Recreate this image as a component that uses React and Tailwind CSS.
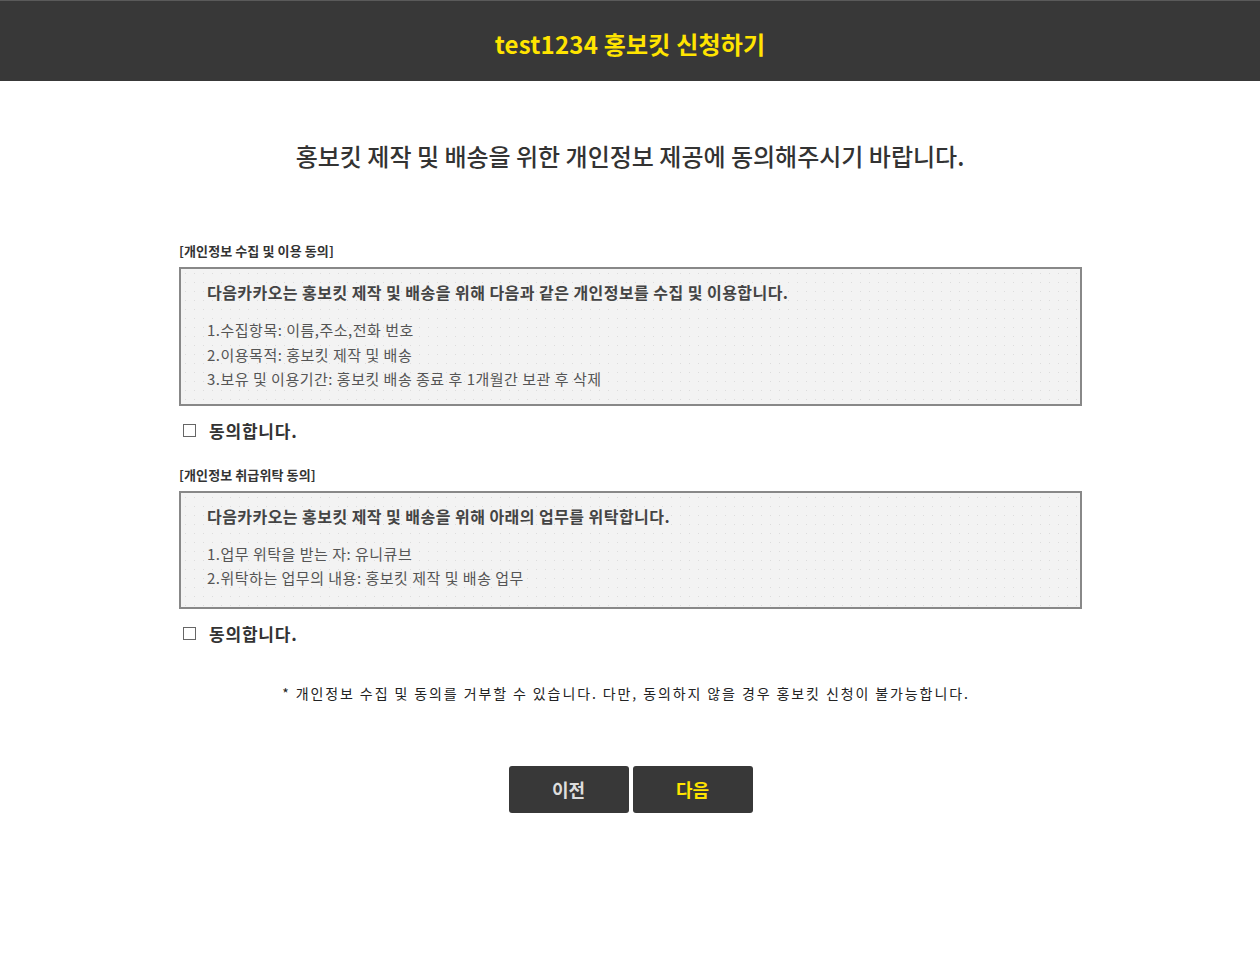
import React from 'react'

const FONT = "font-['Noto_Sans_CJK_KR','Noto_Sans',sans-serif]"

const SECTIONS = [
  {
    label: '[개인정보 수집 및 이용 동의]',
    title: '다음카카오는 홍보킷 제작 및 배송을 위해 다음과 같은 개인정보를 수집 및 이용합니다.',
    lines: ['1.수집항목: 이름,주소,전화 번호', '2.이용목적: 홍보킷 제작 및 배송', '3.보유 및 이용기간: 홍보킷 배송 종료 후 1개월간 보관 후 삭제'],
    pb: 'pb-[12px]',
  },
  {
    label: '[개인정보 취급위탁 동의]',
    title: '다음카카오는 홍보킷 제작 및 배송을 위해 아래의 업무를 위탁합니다.',
    lines: ['1.업무 위탁을 받는 자: 유니큐브', '2.위탁하는 업무의 내용: 홍보킷 제작 및 배송 업무'],
    pb: 'pb-[16px]',
  },
]

function Section({ label, title, lines, pb }) {
  return (
    <div>
      <div className="text-[13px] font-bold text-[#333] tracking-[0.1px] leading-[17px]">{label}</div>
      <div className={`mt-[8px] border-2 border-[#888] bg-[#f3f3f3] bg-[radial-gradient(circle,#dcdcdc_0.8px,transparent_1px)] bg-[length:9px_9px] pl-[26px] pt-[12px] ${pb}`}>
        <div className="text-[16px] font-bold text-[#444] leading-[22px] tracking-[0.45px]">{title}</div>
        <div className="mt-[15px] text-[15px] text-[#555] leading-[24.5px] tracking-[0.5px]">
          {lines.map((l) => (
            <div key={l}>{l}</div>
          ))}
        </div>
      </div>
      <label className="flex items-center mt-[12px] h-[26px] pl-[4px]">
        <span className="w-[13px] h-[13px] border border-[#666] bg-white" />
        <span className="ml-[13px] text-[17px] font-bold text-[#333] tracking-[0.8px]">동의합니다.</span>
      </label>
    </div>
  )
}

export default function App() {
  return (
    <div className={`${FONT} min-h-[954px] bg-white`}>
      <header className="h-[81px] bg-[#383838] border-t border-[#5a5a5a] flex items-center justify-center">
        <h1 className="text-[24px] font-bold text-[#ffe400] tracking-[0.2px] pt-[6px]">test1234 홍보킷 신청하기</h1>
      </header>
      <h2 className="mt-[58px] text-center text-[24px] text-[#333] font-medium leading-[34px]">
        홍보킷 제작 및 배송을 위한 개인정보 제공에 동의해주시기 바랍니다.
      </h2>
      <div className="w-[903px] ml-[179px] mt-[69px] flex flex-col gap-[22px]">
        {SECTIONS.map((s) => (
          <Section key={s.label} {...s} />
        ))}
      </div>
      <p className="mt-[36px] text-center text-[14px] text-[#222] tracking-[1.9px] pr-[8px]">
        * 개인정보 수집 및 동의를 거부할 수 있습니다. 다만, 동의하지 않을 경우 홍보킷 신청이 불가능합니다.
      </p>
      <div className="mt-[62px] flex justify-center gap-[4px] pl-[1px]">
        <button className="w-[120px] h-[47px] rounded-[3px] bg-[#383838] text-[18px] font-bold text-[#ddd]">이전</button>
        <button className="w-[120px] h-[47px] rounded-[3px] bg-[#383838] text-[18px] font-bold text-[#ffe400]">다음</button>
      </div>
    </div>
  )
}
